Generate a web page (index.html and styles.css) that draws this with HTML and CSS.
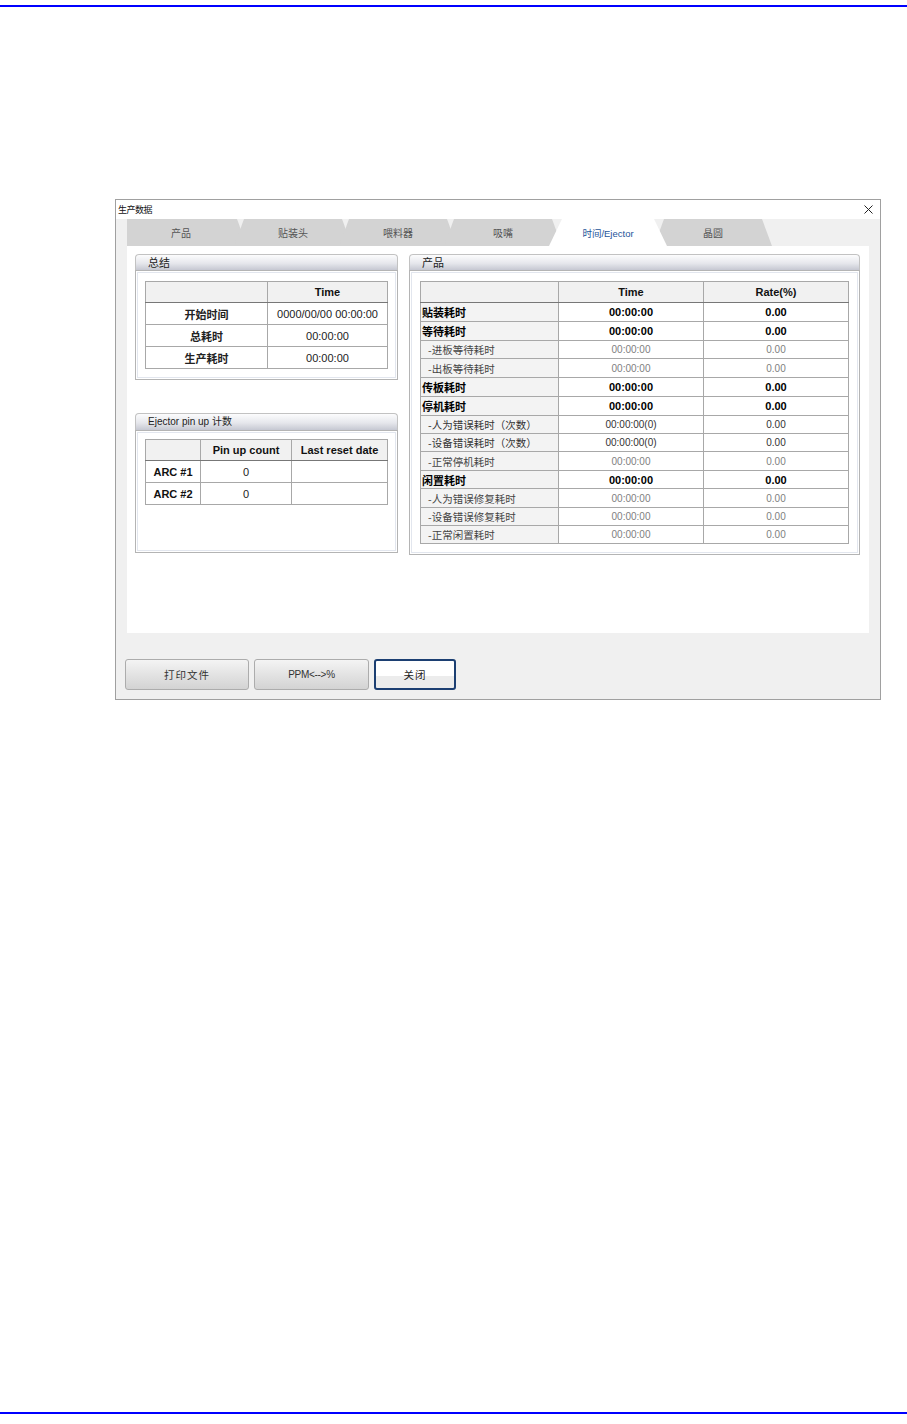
FILE: index.html
```html
<!DOCTYPE html>
<html lang="zh">
<head>
<meta charset="utf-8">
<title>生产数据</title>
<link rel="stylesheet" href="styles.css">
</head>
<body>
<div class="page">
  <div class="rule rule-top"></div>
  <div class="window">
    <div class="titlebar">
      <span class="title">生产数据</span>
      <svg class="close" width="9" height="9" viewBox="0 0 9 9"><path d="M0.5 0.5 L8.5 8.5 M8.5 0.5 L0.5 8.5" stroke="#222" stroke-width="1" fill="none"/></svg>
    </div>
    <div class="win-body">
      <div class="tabpanel">
        <div class="tabs">
          <div class="tab first">产品</div>
          <div class="tab">贴装头</div>
          <div class="tab">喂料器</div>
          <div class="tab">吸嘴</div>
          <div class="tab active">时间/Ejector</div>
          <div class="tab">晶圆</div>
        </div>
        <div class="content">
          <div class="col-left">
            <div class="group g-summary">
              <div class="group-head">总结</div>
              <div class="group-body">
                <table class="grid t-summary">
                  <tr class="hdr"><th class="c1"></th><th class="c2">Time</th></tr>
                  <tr><td class="lbl">开始时间</td><td>0000/00/00 00:00:00</td></tr>
                  <tr><td class="lbl">总耗时</td><td>00:00:00</td></tr>
                  <tr><td class="lbl">生产耗时</td><td>00:00:00</td></tr>
                </table>
              </div>
            </div>
            <div class="group g-ejector">
              <div class="group-head small">Ejector pin up 计数</div>
              <div class="group-body">
                <table class="grid t-ejector">
                  <tr class="hdr"><th class="c1"></th><th class="c2">Pin up count</th><th class="c3">Last reset date</th></tr>
                  <tr><td class="arc">ARC #1</td><td>0</td><td></td></tr>
                  <tr><td class="arc">ARC #2</td><td>0</td><td></td></tr>
                </table>
              </div>
            </div>
          </div>
          <div class="group g-product">
            <div class="group-head">产品</div>
            <div class="group-body">
              <table class="grid t-product">
                <tr class="hdr"><th class="c1"></th><th class="c2">Time</th><th class="c3">Rate(%)</th></tr>
                <tr class="main"><td class="name">贴装耗时</td><td>00:00:00</td><td>0.00</td></tr>
                <tr class="main"><td class="name">等待耗时</td><td>00:00:00</td><td>0.00</td></tr>
                <tr class="sub s"><td class="name">-进板等待耗时</td><td>00:00:00</td><td>0.00</td></tr>
                <tr class="sub"><td class="name">-出板等待耗时</td><td>00:00:00</td><td>0.00</td></tr>
                <tr class="main"><td class="name">传板耗时</td><td>00:00:00</td><td>0.00</td></tr>
                <tr class="main"><td class="name">停机耗时</td><td>00:00:00</td><td>0.00</td></tr>
                <tr class="sub dark s"><td class="name">-人为错误耗时（次数）</td><td>00:00:00(0)</td><td>0.00</td></tr>
                <tr class="sub dark s"><td class="name">-设备错误耗时（次数）</td><td>00:00:00(0)</td><td>0.00</td></tr>
                <tr class="sub"><td class="name">-正常停机耗时</td><td>00:00:00</td><td>0.00</td></tr>
                <tr class="main s"><td class="name">闲置耗时</td><td>00:00:00</td><td>0.00</td></tr>
                <tr class="sub"><td class="name">-人为错误修复耗时</td><td>00:00:00</td><td>0.00</td></tr>
                <tr class="sub s"><td class="name">-设备错误修复耗时</td><td>00:00:00</td><td>0.00</td></tr>
                <tr class="sub s"><td class="name">-正常闲置耗时</td><td>00:00:00</td><td>0.00</td></tr>
              </table>
            </div>
          </div>
        </div>
      </div>
      <div class="buttons">
        <button class="btn b1">打印文件</button>
        <button class="btn b2">PPM&lt;--&gt;%</button>
        <button class="btn b3 focus">关闭</button>
      </div>
    </div>
  </div>
  <div class="spacer"></div>
  <div class="rule rule-bottom"></div>
</div>
</body>
</html>
```
FILE: styles.css
```css
html, body {
  margin: 0;
  padding: 0;
  background: #ffffff;
}
body {
  font-family: "Liberation Sans", Arial, "Noto Sans CJK SC", sans-serif;
  font-size: 11px;
  color: #000;
}
.page {
  width: 907px;
  height: 1424px;
  padding-top: 5px;
  box-sizing: border-box;
}
.rule {
  height: 2px;
  background: #0000ff;
}
.window {
  margin-top: 192px;
  margin-left: 115px;
  width: 766px;
  height: 501px;
  box-sizing: border-box;
  border: 1px solid #a0a0a0;
  display: flex;
  flex-direction: column;
}
.titlebar {
  height: 19px;
  background: #fff;
  display: flex;
  align-items: center;
  justify-content: space-between;
  padding: 0 7px 0 2px;
}
.title {
  font-family: "Noto Sans CJK SC", sans-serif;
  font-size: 9px;
  color: #111;
  letter-spacing: -0.5px;
}
.close {
  display: block;
}
.win-body {
  flex: 1;
  background: #f0f0f0;
  padding-left: 11px;
}
.tabpanel {
  width: 742px;
}
.tabs {
  height: 27px;
  display: flex;
  background: #f0f0f0;
}
.tab {
  position: relative;
  width: 118px;
  height: 27px;
  margin-left: -13px;
  background: #d3d3d3;
  clip-path: polygon(10px 0, calc(100% - 10px) 0, 100% 100%, 0 100%);
  display: flex;
  align-items: center;
  justify-content: center;
  font-family: "Noto Sans CJK SC", sans-serif;
  font-size: 10px;
  color: #555;
}
.tab.first {
  width: 120px;
  margin-left: 0;
  padding-right: 12px;
  box-sizing: border-box;
  clip-path: polygon(0 0, calc(100% - 10px) 0, 100% 100%, 0 100%);
}
.tab.active {
  background: #ffffff;
  color: #24549a;
  z-index: 2;
  clip-path: polygon(13px 0, calc(100% - 13px) 0, 100% 100%, 0 100%);
  font-family: "Liberation Sans", "Noto Sans CJK SC", sans-serif;
  font-size: 9.5px;
}
.content {
  height: 387px;
  background: #ffffff;
  box-sizing: border-box;
  padding: 8px 9px 0 8px;
  display: flex;
  gap: 11px;
  align-items: flex-start;
}
.col-left {
  width: 263px;
  display: flex;
  flex-direction: column;
  gap: 33px;
}
.group {
  box-sizing: border-box;
}
.group-head {
  height: 16px;
  box-sizing: border-box;
  border: 1px solid #c2c2c2;
  border-bottom: none;
  border-radius: 4px 4px 0 0;
  background: linear-gradient(#fcfcfd, #e6e7ec 55%, #c6c8d2);
  padding-left: 12px;
  font-family: "Noto Sans CJK SC", sans-serif;
  font-size: 11px;
  line-height: 14px;
  color: #222;
}
.group-head.small {
  height: 17px;
  font-family: "Liberation Sans", "Noto Sans CJK SC", sans-serif;
  font-size: 10px;
  line-height: 15px;
}
.group-body {
  border: 1px solid #b4b4b4;
  box-shadow: inset 0 0 0 1px #ffffff, inset 0 0 0 2px #e2e6ee;
  box-sizing: border-box;
  background: #fff;
}
.g-summary .group-body {
  height: 110px;
  padding: 10px 0 0 9px;
}
.g-ejector .group-body {
  height: 123px;
  padding: 8px 0 0 9px;
}
.g-product {
  width: 451px;
}
.g-product .group-body {
  height: 285px;
  padding: 10px 0 0 10px;
}

.grid {
  border-collapse: collapse;
  table-layout: fixed;
  border: 1px solid #6f6f6f;
}
.grid th, .grid td {
  border: 1px solid #a8a8a8;
  padding: 0;
  text-align: center;
  white-space: nowrap;
  overflow: hidden;
}
.grid tr.hdr th {
  background: #f1f1f1;
  font-weight: bold;
  font-size: 11px;
  color: #111;
  height: 20px;
  border-bottom-color: #777;
}
.t-summary { width: 243px; }
.t-summary .c1 { width: 121px; }
.t-summary td {
  height: 21px;
  font-size: 11px;
  color: #222;
}
.t-summary td.lbl {
  font-family: "Noto Sans CJK SC", sans-serif;
  font-weight: bold;
  font-size: 11px;
}
.t-ejector { width: 243px; }
.t-ejector .c1 { width: 54px; }
.t-ejector .c2 { width: 90px; }
.t-ejector td {
  height: 21px;
  font-size: 11px;
  color: #222;
}
.t-ejector td.arc {
  font-weight: bold;
  color: #111;
}
.t-product { width: 429px; }
.t-product .c1 { width: 137px; }
.t-product .c2 { width: 144px; }
.t-product td {
  height: 18px;
  font-size: 11px;
}
.t-product tr.s td { height: 17px; }
.t-product td.name {
  text-align: left;
  background: #f3f3f3;
  font-family: "Noto Sans CJK SC", sans-serif;
  font-size: 10.5px;
  padding-left: 1px;
}
.t-product tr.main td {
  font-weight: bold;
  color: #000;
  border-top-color: #6f6f6f;
}
.t-product tr.main td.name {
  font-weight: bold;
  font-size: 11px;
}
.t-product tr.sub td {
  color: #808080;
  border-top-color: #c4c4c4;
  font-size: 10px;
}
.t-product tr.sub td.name {
  padding-left: 7px;
  color: #444;
  font-size: 10.5px;
}
.t-product tr.sub.dark td { color: #333; }

.buttons {
  margin-top: 26px;
  margin-left: -2px;
  display: flex;
  gap: 5px;
}
.btn {
  height: 31px;
  box-sizing: border-box;
  border: 1px solid #acacac;
  border-radius: 3px;
  background: linear-gradient(#f4f4f4, #e3e3e3 50%, #d3d3d3);
  font-family: "Noto Sans CJK SC", "Liberation Sans", sans-serif;
  font-size: 10.5px;
  color: #333;
  padding: 0;
  letter-spacing: 1px;
}
.b1 { width: 124px; }
.b2 { width: 115px; font-family: "Liberation Sans", sans-serif; font-size: 10px; letter-spacing: -0.3px; }
.b3 { width: 82px; }
.btn.focus {
  border: 2px solid #1c3f72;
  background: linear-gradient(#ffffff, #ffffff 55%, #ececec 56%, #ececec);
  color: #222;
}
.spacer {
  height: 712px;
}
```
